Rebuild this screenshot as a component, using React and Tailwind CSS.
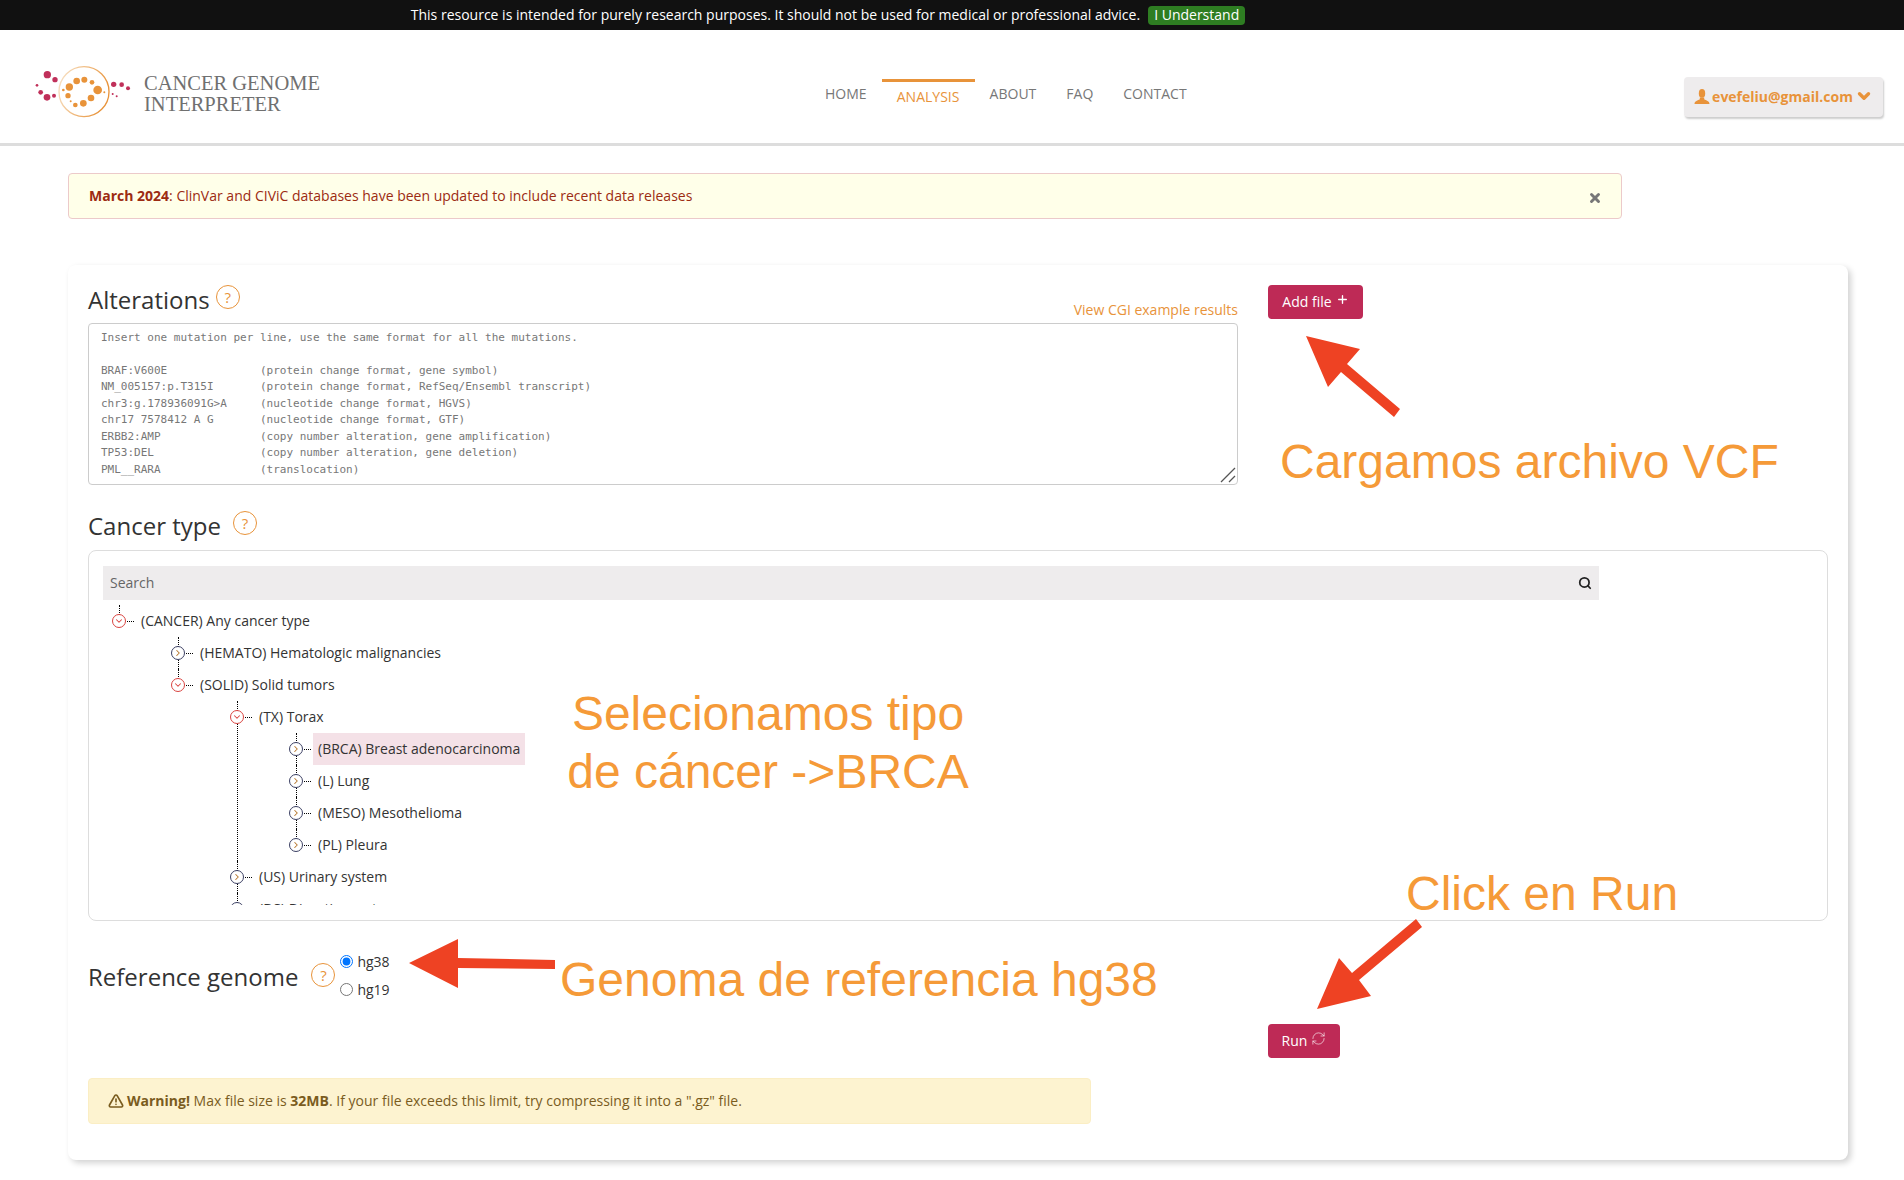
import { Search, ChevronDown, ChevronRight, X, Plus, RefreshCw, AlertTriangle } from "lucide-react";

const HelpIcon = ({ className = "" }) => (
  <span className={`inline-flex h-6 w-6 items-center justify-center rounded-full border-[1.75px] border-[#e8933a] text-[15px] text-[#e8933a] ${className}`}>?</span>
);

const Heading = ({ children, className = "" }) => (
  <h2 className={`text-[24px] leading-[32px] text-[#333] ${className}`}>{children}</h2>
);

const PlaceholderText = `Insert one mutation per line, use the same format for all the mutations.

BRAF:V600E              (protein change format, gene symbol)
NM_005157:p.T315I       (protein change format, RefSeq/Ensembl transcript)
chr3:g.178936091G>A     (nucleotide change format, HGVS)
chr17 7578412 A G       (nucleotide change format, GTF)
ERBB2:AMP               (copy number alteration, gene amplification)
TP53:DEL                (copy number alteration, gene deletion)
PML__RARA               (translocation)`;

const TreeNode = ({ label, open, last, selected, children }) => (
  <li className="relative">
    <span className={`absolute left-[7px] top-0 w-0 border-l border-dotted border-black ${last ? "h-[16px]" : "h-full"}`} />
    <div className="flex h-8 items-center">
      <span className={`relative z-10 flex h-[14px] w-[14px] items-center justify-center rounded-full border-[1.5px] bg-white ${open ? "border-[#d9433f]" : "border-[#3b3f63]"}`}>
        {open ? <ChevronDown size={10} strokeWidth={2.5} className="text-[#d9433f]" /> : <ChevronRight size={10} strokeWidth={2.5} className="text-[#b5752a]" />}
      </span>
      <span className="ml-[1px] w-[7px] border-t border-dotted border-black" />
      <span className={`ml-[2px] flex h-8 items-center px-[5px] pb-[1px] text-[#333] ${selected ? "bg-[#f4e1e7]" : ""}`}>{label}</span>
    </div>
    {children && <ul className="pl-[59px]">{children}</ul>}
  </li>
);

const Logo = () => (
  <svg width="100" height="57" viewBox="100 190 300 171">
    <defs>
      <linearGradient id="ring" x1="0" y1="0" x2="1" y2="0.3">
        <stop offset="0" stopColor="#f8e6cd" />
        <stop offset="1" stopColor="#e8933a" />
      </linearGradient>
    </defs>
    <circle cx="253" cy="276" r="75" fill="none" stroke="url(#ring)" strokeWidth="4" />
    <g fill="#c0305a">
      <circle cx="143" cy="225" r="11" /><circle cx="166" cy="240" r="8" /><circle cx="112" cy="257" r="4" />
      <circle cx="123" cy="278" r="7" /><circle cx="142" cy="293" r="10" /><circle cx="163" cy="288" r="6" />
      <circle cx="342" cy="254" r="8" /><circle cx="366" cy="255" r="7" /><circle cx="385" cy="266" r="6" />
      <circle cx="339" cy="283" r="3" /><circle cx="351" cy="290" r="3" />
    </g>
    <g fill="#e8933a">
      <circle cx="231" cy="244" r="10" /><circle cx="254" cy="240" r="9" /><circle cx="277" cy="248" r="7" />
      <circle cx="209" cy="262" r="11" /><circle cx="191" cy="271" r="4" /><circle cx="294" cy="271" r="13" />
      <circle cx="314" cy="278" r="3" /><circle cx="205" cy="288" r="8" /><circle cx="274" cy="295" r="10" />
      <circle cx="213" cy="305" r="3" /><circle cx="251" cy="311" r="10" /><circle cx="227" cy="316" r="7" />
    </g>
  </svg>
);

const UserGlyph = () => (
  <svg width="16" height="15" viewBox="0 0 16 15" fill="currentColor" className="mr-[2px]">
    <ellipse cx="8" cy="4.4" rx="3.2" ry="4.4" />
    <path d="M0.5 15c0-3.2 3.4-3.6 5.3-4.8V8.5h4.4v1.7c1.9 1.2 5.3 1.6 5.3 4.8z" />
  </svg>
);

// annotations painted over the screenshot
const Annotations = () => (
  <>
    <svg className="pointer-events-none absolute left-0 top-0" width="1904" height="1180">
      <g fill="#ee4223">
        <polygon points="1306,336 1360,349 1347,364 1400,409 1394,417 1341,372 1328,387" />
        <polygon points="409,963 458,939 458,958 555,960 555,969 458,968 458,988" />
        <polygon points="1416,919 1422,927 1359,980 1371,996 1317,1009 1339,958 1352,973" />
      </g>
    </svg>
    <p className="absolute left-[1280px] top-[434px] text-[48px] leading-[56px] text-[#f59a38] [font-family:'Liberation_Sans',sans-serif]">Cargamos archivo VCF</p>
    <p className="absolute left-[538px] top-[685px] w-[460px] text-center text-[48px] leading-[58px] text-[#f59a38] [font-family:'Liberation_Sans',sans-serif]">Selecionamos tipo<br />de cáncer -&gt;BRCA</p>
    <p className="absolute left-[560px] top-[952px] text-[48px] leading-[56px] text-[#f59a38] [font-family:'Liberation_Sans',sans-serif]">Genoma de referencia hg38</p>
    <p className="absolute left-[1406px] top-[866px] text-[48px] leading-[56px] text-[#f59a38] [font-family:'Liberation_Sans',sans-serif]">Click en Run</p>
  </>
);

export default function App() {
  return (
    <div className="relative min-h-[1180px] bg-white text-[14px] text-[#333] [font-family:'Open_Sans',sans-serif]">
      <div className="flex h-[30px] items-center justify-center bg-[#111] pr-[248px] text-white">
        <span className="pb-[2px]">This resource is intended for purely research purposes. It should not be used for medical or professional advice.</span>
        <span className="ml-2 flex h-[19px] items-center rounded-[4px] bg-[#2e7d22] px-[6px] pb-[1px] leading-[18px]">I Understand</span>
      </div>

      <header className="flex h-[116px] items-start border-b-[3px] border-[#ddd]">
        <div className="ml-[33px] mt-[33px] flex items-center">
          <Logo />
          <div className="ml-[11px] mt-[4px] w-[200px] text-[20.5px] leading-[21px] text-[#707070] [font-family:'Liberation_Serif',serif]">
            CANCER GENOME<br />INTERPRETER
          </div>
        </div>
        <nav className="ml-[481px] mt-[49px] flex text-[#777]">
          <a className="mt-[5px] leading-5">HOME</a>
          <a className="ml-[15px] w-[93px] border-t-[3px] border-[#e8933a] pt-[5px] text-center leading-5 text-[#e8933a]">ANALYSIS</a>
          <a className="ml-[15px] mt-[5px] leading-5">ABOUT</a>
          <a className="ml-[30px] mt-[5px] leading-5">FAQ</a>
          <a className="ml-[30px] mt-[5px] leading-5">CONTACT</a>
        </nav>
        <div className="ml-auto mr-[21px] mt-[47px] flex h-10 w-[199px] items-center justify-center rounded-[4px] bg-[#eeeced] pb-[2px] font-bold text-[#e8933a] shadow-[1px_2px_2px_rgba(0,0,0,0.2)]">
          <UserGlyph />
          evefeliu@gmail.com
          <ChevronDown size={18} strokeWidth={4.5} className="ml-[2px]" />
        </div>
      </header>

      <div className="ml-[68px] mt-[27px] flex h-[46px] w-[1554px] items-center justify-between rounded-[4px] border border-[#eccaca] bg-[#ffffe9] pl-5 pr-[19px] text-[#9c2b12]">
        <span className="pb-[2px]"><b className="font-bold">March 2024</b>: ClinVar and CIViC databases have been updated to include recent data releases</span>
        <X size={14} strokeWidth={5} className="mt-[3px] text-[#777]" />
      </div>

      <main className="ml-[68px] mt-[46px] h-[895px] w-[1780px] rounded-lg bg-white px-5 pt-[20px] shadow-[3px_3px_6px_rgba(0,0,0,0.18)]">
        <div className="flex">
          <div className="w-[1150px]">
            <div className="flex h-[38px] items-start justify-between">
              <div className="flex items-start">
                <Heading className="-mt-[1px]">Alterations</Heading>
                <HelpIcon className="ml-[6px]" />
              </div>
              <a className="mt-[15px] leading-5 text-[#e8933a]">View CGI example results</a>
            </div>
            <div className="relative">
              <textarea
                readOnly
                defaultValue={PlaceholderText}
                className="block h-[162px] w-full resize-none overflow-hidden rounded-[4px] border border-[#ccc] px-3 pb-[4px] pt-[5.7px] text-[11px] leading-[16.5px] text-[#777] outline-none [font-family:'DejaVu_Sans_Mono',monospace]"
              />
              <svg className="absolute bottom-[2px] right-[2px]" width="16" height="16" viewBox="0 0 16 16" stroke="#555" strokeWidth="1.3">
                <path d="M1 15 15 1M9 15l6-6" />
              </svg>
            </div>
          </div>
          <button className="ml-[30px] flex h-[34px] w-[95px] items-center justify-center rounded-[4px] bg-[#be2a56] pb-[2px] text-white">
            Add file<Plus size={13} strokeWidth={2.5} className="mb-1 ml-1" />
          </button>
        </div>

        <div className="mt-6 flex h-[41px] items-start">
          <Heading className="mt-[1px]">Cancer type</Heading>
          <HelpIcon className="ml-[12px] mt-[2px]" />
        </div>

        <div className="h-[371px] w-[1740px] rounded-lg border border-[#ddd] px-[14px] pt-[15px]">
          <div className="flex h-[34px] w-[1496px] items-center justify-between bg-[#eeeced] px-[7px] text-[#666]">
            <span className="pb-[1px]">Search</span>
            <Search size={14} strokeWidth={3} className="text-[#222]" />
          </div>
          <div className="ml-[2px] mt-[5px] h-[300px] overflow-hidden">
            <ul className="pl-[7px]">
              <TreeNode label="(CANCER) Any cancer type" open last>
                <TreeNode label="(HEMATO) Hematologic malignancies" />
                <TreeNode label="(SOLID) Solid tumors" open last>
                  <TreeNode label="(TX) Torax" open>
                    <TreeNode label="(BRCA) Breast adenocarcinoma" selected />
                    <TreeNode label="(L) Lung" />
                    <TreeNode label="(MESO) Mesothelioma" />
                    <TreeNode label="(PL) Pleura" last />
                  </TreeNode>
                  <TreeNode label="(US) Urinary system" />
                  <TreeNode label="(DS) Digestive system" />
                </TreeNode>
              </TreeNode>
            </ul>
          </div>
        </div>

        <div className="flex">
          <div className="w-[1003px]">
            <div className="mt-[30px] flex h-[48px] items-center">
              <Heading className="mt-[4px]">Reference genome</Heading>
              <HelpIcon className="ml-[13px]" />
              <div className="ml-[5px] flex flex-col gap-[8px]">
                <label className="flex h-5 items-center gap-[4px]"><input type="radio" name="genome" defaultChecked className="m-0" />hg38</label>
                <label className="flex h-5 items-center gap-[4px]"><input type="radio" name="genome" className="m-0" />hg19</label>
              </div>
            </div>
            <div className="mt-[79px] flex h-[46px] items-center rounded-[4px] border border-[#fbeec4] bg-[#fdf3d0] pl-[19px] text-[#7a5c1e]">
              <AlertTriangle size={16} strokeWidth={2.5} className="mr-[3px]" />
              <span className="pb-[2px]"><b className="font-bold">Warning!</b> Max file size is <b className="font-bold">32MB</b>. If your file exceeds this limit, try compressing it into a ".gz" file.</span>
            </div>
          </div>
          <button className="ml-[177px] mt-[103px] flex h-[34px] w-[72px] items-center justify-center rounded-[4px] bg-[#be2a56] pb-[2px] text-white">
            Run<RefreshCw size={15} strokeWidth={1} className="mb-1 ml-1" />
          </button>
        </div>
      </main>

      <Annotations />
    </div>
  );
}
